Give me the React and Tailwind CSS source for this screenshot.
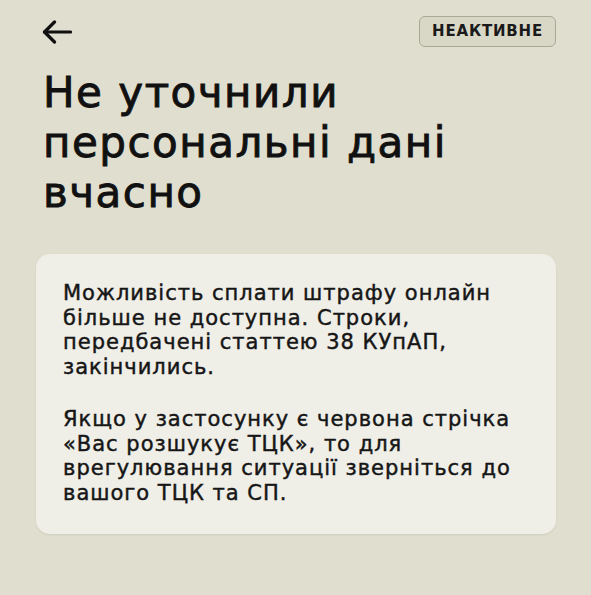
import React from 'react';

const BackArrow = () => (
  <svg width="30" height="24" viewBox="0 0 30 24" fill="none" stroke="#111" strokeWidth="3.2" strokeLinecap="round" strokeLinejoin="round">
    <path d="M2.5 12H28.5" />
    <path d="M12.5 2L2.5 12L12.5 22" />
  </svg>
);

const App = () => {
  return (
    <div
      className="min-h-[595px] w-full bg-[#e0dece] px-9 pt-4 text-[#111]"
      style={{ fontFamily: '"DejaVu Sans", "Noto Sans", sans-serif' }}
    >
      {/* Header */}
      <div className="flex h-[31px] items-center justify-between pl-[6px]">
        <button className="flex items-center">
          <BackArrow />
        </button>
        <span className="mr-[-1px] flex h-[31px] items-center rounded-[6px] border border-[#a9a797] bg-[#d9d7c6] px-[12px] text-[15px] font-bold tracking-[0.8px] text-[#1a1a1a]">
          НЕАКТИВНЕ
        </span>
      </div>

      {/* Title */}
      <h1 className="mt-[21px] pl-[7px] text-[42px] leading-[50px] font-normal tracking-[1.5px] [-webkit-text-stroke:0.9px_#111]">
        Не уточнили<br />
        персональні дані<br />
        вчасно
      </h1>

      {/* Card */}
      <div className="mt-[36px] w-[520px] rounded-[14px] bg-[#efeee7] pt-[27px] pr-6 pb-[29px] pl-[27px] text-[21px] leading-[24.5px] tracking-[1px] text-[#161616] shadow-[0_1px_2px_rgba(0,0,0,0.08)] [-webkit-text-stroke:0.45px_#161616]">
        <p>
          Можливість сплати штрафу онлайн<br />
          більше не доступна. Строки,<br />
          передбачені статтею 38 КУпАП,<br />
          закінчились.
        </p>
        <p className="mt-[28px]">
          Якщо у застосунку є червона стрічка<br />
          «Вас розшукує ТЦК», то для<br />
          врегулювання ситуації зверніться до<br />
          вашого ТЦК та СП.
        </p>
      </div>
    </div>
  );
};

export default App;
